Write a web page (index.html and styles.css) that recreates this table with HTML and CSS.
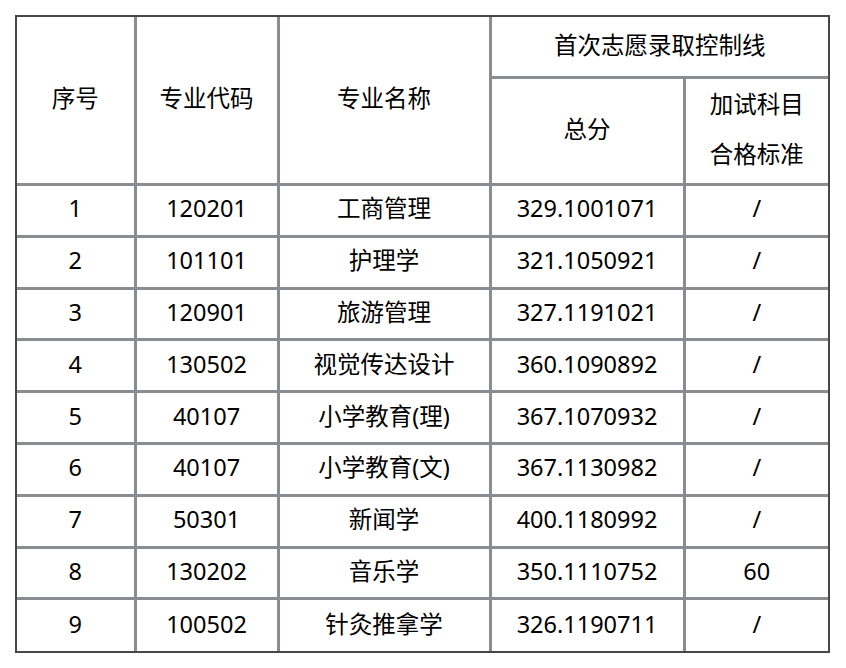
FILE: index.html
```html
<!DOCTYPE html>
<html lang="zh">
<head>
<meta charset="utf-8">
<link rel="stylesheet" href="styles.css">
</head>
<body>
<div class="frame">
<table class="grid">
<colgroup>
<col class="c1"><col class="c2"><col class="c3"><col class="c4"><col class="c5">
</colgroup>
<thead>
<tr class="h1">
<th rowspan="2">序号</th>
<th rowspan="2">专业代码</th>
<th rowspan="2">专业名称</th>
<th colspan="2">首次志愿录取控制线</th>
</tr>
<tr class="h2">
<th>总分</th>
<th class="two">加试科目<br>合格标准</th>
</tr>
</thead>
<tbody>
<tr><td>1</td><td>120201</td><td>工商管理</td><td>329.1001071</td><td>/</td></tr>
<tr><td>2</td><td>101101</td><td>护理学</td><td>321.1050921</td><td>/</td></tr>
<tr><td>3</td><td>120901</td><td>旅游管理</td><td>327.1191021</td><td>/</td></tr>
<tr><td>4</td><td>130502</td><td>视觉传达设计</td><td>360.1090892</td><td>/</td></tr>
<tr><td>5</td><td>40107</td><td>小学教育(理)</td><td>367.1070932</td><td>/</td></tr>
<tr><td>6</td><td>40107</td><td>小学教育(文)</td><td>367.1130982</td><td>/</td></tr>
<tr><td>7</td><td>50301</td><td>新闻学</td><td>400.1180992</td><td>/</td></tr>
<tr><td>8</td><td>130202</td><td>音乐学</td><td>350.1110752</td><td>60</td></tr>
<tr><td>9</td><td>100502</td><td>针灸推拿学</td><td>326.1190711</td><td>/</td></tr>
</tbody>
</table>
</div>
</body>
</html>
```
FILE: styles.css
```css
html, body {
  margin: 0;
  padding: 0;
  background: #ffffff;
}
body {
  padding: 15px;
  font-family: "Noto Sans", "Noto Sans CJK SC", sans-serif;
  color: #000;
}
.frame {
  width: 811px;
  border: 2px solid #474747;
}
.grid {
  width: 811px;
  table-layout: fixed;
  border-collapse: collapse;
  border-style: hidden;
}
.c1 { width: 118px; }
.c2 { width: 143px; }
.c3 { width: 212px; }
.c4 { width: 194px; }
.c5 { width: 144px; }
th, td {
  border: 3px solid #8a8c91;
  padding: 0 0 4px 0;
  text-align: center;
  vertical-align: middle;
  font-size: 23.5px;
  font-weight: 400;
  line-height: 30px;
}
.h1 th { height: 55px; }
.h2 th { height: 96px; }
.two { line-height: 50px; }
tbody tr { height: 51.8px; }
tbody td { height: 44.8px; }
```
